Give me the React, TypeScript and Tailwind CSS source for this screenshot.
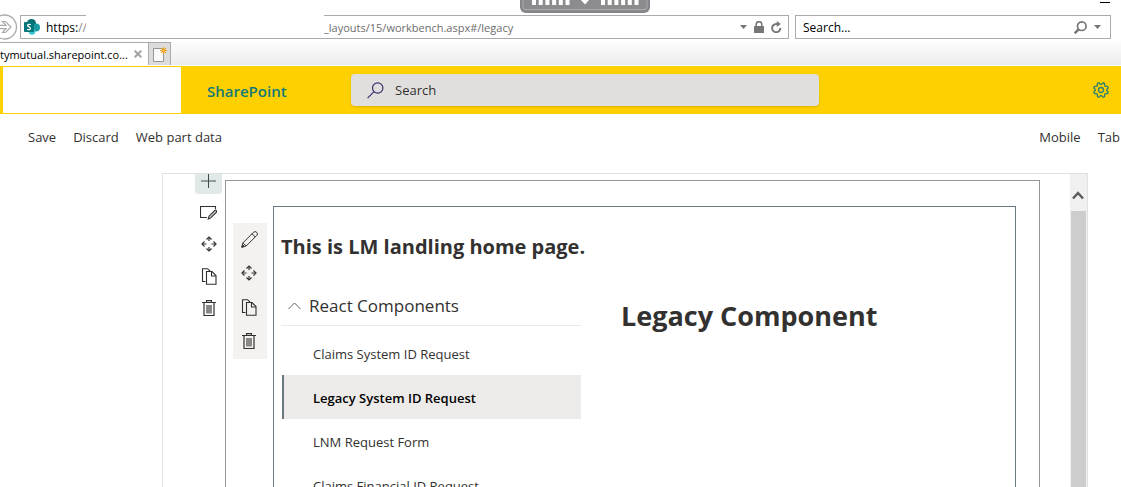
import React from "react";

type IconProps = { className?: string };

function ForwardIcon() {
  return (
    <svg width="18" height="26" viewBox="0 0 18 26" fill="none" stroke="#ababab">
      <circle cx="4.500" cy="13" r="12" strokeWidth="1.300" />
      <path d="M-4 11.300H6L2.500 7.500H5.500L11 13L5.500 18.500H2.500L6 14.700H-4" strokeWidth="1.200" />
    </svg>
  );
}

function SharePointLogo() {
  return (
    <svg width="16" height="16" viewBox="0 0 16 16">
      <circle cx="7.500" cy="4.500" r="4.500" fill="#036c70" />
      <circle cx="12" cy="8.500" r="4" fill="#1a9ba1" />
      <circle cx="8" cy="12.500" r="3.200" fill="#37c6d0" />
      <rect x="0" y="3" width="10" height="10" rx="0.800" fill="#03787c" />
      <path
        d="M6.700 5.700C6.200 5.300 3.600 5 3.500 6.600C3.500 8.200 6.500 7.700 6.500 9.400C6.500 11 3.900 10.700 3.200 10.200"
        stroke="#fff"
        strokeWidth="1.300"
        fill="none"
      />
    </svg>
  );
}

function CaretDown() {
  return (
    <svg width="7" height="4" viewBox="0 0 7 4" fill="#767676">
      <path d="M0 0H7L3.500 4Z" />
    </svg>
  );
}

function LockIcon() {
  return (
    <svg width="10" height="12" viewBox="0 0 10 12">
      <path d="M2.200 6V3.500a2.800 2.800 0 0 1 5.600 0V6" fill="none" stroke="#767676" strokeWidth="1.500" />
      <rect y="5" width="10" height="7" rx="0.600" fill="#767676" />
    </svg>
  );
}

function ReloadIcon() {
  return (
    <svg width="11" height="12" viewBox="0 0 11 12" fill="none">
      <path d="M9.300 6.900A4.100 4.100 0 1 1 5.200 3H7" stroke="#767676" strokeWidth="1.900" />
      <path d="M5.800 0L9.800 3L5.800 6Z" fill="#767676" />
    </svg>
  );
}

function BrowserSearchIcon() {
  return (
    <svg width="13" height="13" viewBox="0 0 13 13" fill="none" stroke="#767676">
      <circle cx="7.800" cy="5.200" r="4.300" strokeWidth="1.700" />
      <path d="M4.800 8.200L0.700 12.300" strokeWidth="2.400" />
    </svg>
  );
}

function CloseIcon() {
  return (
    <svg width="8" height="8" viewBox="0 0 8 8" stroke="#a3a3a3" strokeWidth="2">
      <path d="M0.700 0.700L7.300 7.300M7.300 0.700L0.700 7.300" />
    </svg>
  );
}

function NewTabIcon() {
  return (
    <svg width="14" height="15" viewBox="0 0 14 15" fill="none">
      <path d="M0.500 1.500H10.500V14.500H0.500Z" fill="#fafafa" stroke="#969696" />
      <circle cx="10.500" cy="3.500" r="2.200" fill="#f6a81c" />
      <path
        d="M10.500 0V7M7 3.500H14M8 1L13 6M13 1L8 6"
        stroke="#e79a1a"
        strokeWidth="0.900"
      />
      <circle cx="10.500" cy="3.500" r="1.100" fill="#ffd35c" />
    </svg>
  );
}

function SearchIcon() {
  return (
    <svg width="17" height="17" viewBox="0 0 17 17" fill="none" stroke="#3b2e6b" strokeWidth="1.200">
      <circle cx="10.700" cy="6" r="5.200" />
      <path d="M7 9.700L0.600 16.100" />
    </svg>
  );
}

function GearIcon() {
  const teeth = Array.from({ length: 64 }, (_, i) => {
    const angle = (i / 64) * Math.PI * 2 + Math.PI / 8;
    const radius = 6.6 - Math.max(-0.9, Math.min(0.9, Math.cos((angle) * 8) * 1.6));
    return `${(8 + radius * Math.sin(angle)).toFixed(2)},${(8 - radius * Math.cos(angle)).toFixed(2)}`;
  }).join(" ");
  return (
    <svg width="16" height="16" viewBox="0 0 16 16" fill="none" stroke="#2b8073" strokeWidth="1.300">
      <polygon points={teeth} />
      <circle cx="8" cy="8" r="2.500" />
    </svg>
  );
}

function PlusIcon() {
  return (
    <svg width="15" height="15" viewBox="0 0 15 15">
      <path d="M0 7H15" stroke="#7d8a8c" strokeWidth="1.600" />
      <path d="M7.500 0V14" stroke="#3c4a4d" />
    </svg>
  );
}

function EditSectionIcon() {
  return (
    <svg width="17" height="15" viewBox="0 0 17 15" fill="none" stroke="#323130">
      <path d="M7 12.500H0.500V1.500H15.500V4" strokeWidth="1.100" />
      <path d="M8.300 14L9 11.200L14.600 5.600A1.200 1.200 0 0 1 16.300 7.300L10.800 12.900Z" fill="#c8c8c8" strokeWidth="1.100" />
    </svg>
  );
}

function PencilIcon() {
  return (
    <svg width="17" height="17" viewBox="0 0 17 17" fill="none" stroke="#323130">
      <path d="M0.800 16.200L2 11.800L12.500 1.300A2 2 0 0 1 15.700 4.500L5.200 15Z" />
      <path d="M2 11.800L5.200 15M11 2.800L14.200 6M0.800 16.200L3.300 15.500L1.600 13.700Z" />
    </svg>
  );
}

function MoveIcon() {
  return (
    <svg width="16" height="16" viewBox="0 0 16 16" fill="none" stroke="#323130" strokeWidth="1.200">
      <path d="M8 1V5M8 11V15M1 8H5.500M10.500 8H15" />
      <path d="M5.500 3.500L8 1L10.500 3.500M5.500 12.500L8 15L10.500 12.500M3.500 5.500L1 8L3.500 10.500M12.500 5.500L15 8L12.500 10.500" />
    </svg>
  );
}

function CopyIcon() {
  return (
    <svg width="16" height="17" viewBox="0 0 16 17" fill="none" stroke="#323130" strokeWidth="1.100">
      <path d="M4.500 13.500H1.500V0.700H6.500L9 3" />
      <path d="M5.500 3.500H11L15 7.500V16.300H5.500Z" />
      <path d="M10.500 3.500V8H15" />
    </svg>
  );
}

function TrashIcon() {
  return (
    <svg width="14" height="17" viewBox="0 0 14 17" fill="none" stroke="#323130">
      <path d="M0 2.500H14M4.500 2.500V0.600H9.500V2.500" strokeWidth="1.100" />
      <path d="M2 2.500V15.500H12V2.500" strokeWidth="1.200" />
      <rect x="4" y="5" width="6" height="8.500" fill="#8a8886" stroke="none" />
    </svg>
  );
}

function ChevronUp({ className }: IconProps) {
  return (
    <svg className={className} width="13" height="8" viewBox="0 0 13 8" fill="none" stroke="#605e5c">
      <path d="M0.500 7L6.500 1L12.500 7" />
    </svg>
  );
}

function ScrollUpIcon() {
  return (
    <svg width="12" height="9" viewBox="0 0 12 9" fill="none" stroke="#5c5c5c" strokeWidth="2.500">
      <path d="M1 7.500L6 2L11 7.500" />
    </svg>
  );
}

function SessionGrip() {
  const dots = [0, 1, 2, 3, 4, 5];
  return (
    <div className="absolute top-0 left-[520px] h-[13px] w-[130px] rounded-b-md border-x-2 border-b-2 border-[#84848a] bg-[#8c8c8e]">
      <svg width="126" height="11" viewBox="0 0 126 11" fill="#fff">
        <path d="M1 0V7Q1 9.500 4 9.500H122Q125 9.500 125 7V0" fill="none" stroke="#a9a9ab" />
        {dots.map((i) => (
          <g key={i}>
            <rect x={10 + i * 6.7} width="4" height="5" />
            <rect x={79 + i * 6.7} width="4" height="5" />
          </g>
        ))}
        <path d="M59 0H67L63 4.500Z" />
      </svg>
    </div>
  );
}

function BrowserChrome() {
  return (
    <header className="text-xs text-black">
      <div className="flex h-[15px] items-start justify-end pr-[11px]">
        <button aria-label="Minimize" className="mt-0.5 h-px w-2.5 bg-black" />
      </div>
      <div className="flex h-6 items-center pr-2.5">
        <button aria-label="Forward" className="w-5 shrink-0">
          <ForwardIcon />
        </button>
        <div className="relative flex h-full min-w-0 flex-1 items-center border border-[#ababab] pr-1.5 pl-[3px]">
          <SharePointLogo />
          <span className="ml-1.5 pt-0.5">https:</span>
          <span className="pt-0.5 text-[#8a8a8a]">//</span>
          <div className="absolute -top-px left-[65px] h-[23px] w-[238px] bg-white" />
          <input
            aria-label="Address"
            defaultValue="_layouts/15/workbench.aspx#/legacy"
            className="absolute left-[303px] w-[300px] bg-transparent pt-0.5 text-[11px] text-[#6d6d6d] outline-none"
          />
          <div className="ml-auto flex items-center gap-[7px]">
            <button aria-label="Show address history">
              <CaretDown />
            </button>
            <LockIcon />
            <button aria-label="Reload">
              <ReloadIcon />
            </button>
          </div>
        </div>
        <div className="ml-1.5 flex h-full w-[316px] shrink-0 items-center gap-[7px] border border-[#ababab] pr-[9px] pl-[7px]">
          <input
            aria-label="Search the web"
            placeholder="Search..."
            className="min-w-0 flex-1 bg-transparent pt-0.5 outline-none placeholder:text-black"
          />
          <button aria-label="Go">
            <BrowserSearchIcon />
          </button>
          <button aria-label="Search providers">
            <CaretDown />
          </button>
        </div>
      </div>
      <div className="border-b border-white bg-linear-to-b from-white to-[#ececec] pt-[3px]">
        <div className="flex h-[23px]">
          <div className="flex w-[148px] items-center justify-between border-t border-[#ababab] bg-white pr-1.5">
            <span className="pt-0.5 text-[11px] whitespace-nowrap">tymutual.sharepoint.co...</span>
            <button aria-label="Close tab">
              <CloseIcon />
            </button>
          </div>
          <button
            aria-label="New tab"
            className="flex w-[23px] items-center justify-center border border-b-0 border-[#ababab] bg-[#dcdcdc]"
          >
            <NewTabIcon />
          </button>
        </div>
      </div>
    </header>
  );
}

function SuiteBar() {
  return (
    <div className="flex h-12 items-center bg-[#ffd000] pr-3 pl-[3px]">
      <div className="h-[46px] w-[178px] shrink-0 bg-white" />
      <a href="#" className="ml-[26px] w-36 shrink-0 pt-0.5 text-[15px] font-semibold text-[#0f7a78]">
        SharePoint
      </a>
      <label className="flex h-8 w-[468px] items-center gap-[11px] rounded-sm bg-[#e0dfdd] px-4 shadow-[0_1px_2px_rgba(0,0,0,0.15)]">
        <SearchIcon />
        <input
          aria-label="Search"
          placeholder="Search"
          className="min-w-0 flex-1 bg-transparent pt-0.5 text-[13px] outline-none placeholder:text-[#323130]"
        />
      </label>
      <button aria-label="Settings" className="ml-auto">
        <GearIcon />
      </button>
    </div>
  );
}

function CommandBar() {
  return (
    <div className="flex h-[59px] items-start justify-between pt-3.5 pr-px pl-7 text-[13px] leading-[18px] text-[#323130]">
      <div className="flex gap-[17px]">
        <button>Save</button>
        <button>Discard</button>
        <button>Web part data</button>
      </div>
      <div className="flex gap-[17px]">
        <button>Mobile</button>
        <button>Tab</button>
      </div>
    </div>
  );
}

const sectionTools = [
  { label: "Edit section", icon: <EditSectionIcon /> },
  { label: "Move section", icon: <MoveIcon /> },
  { label: "Duplicate section", icon: <CopyIcon /> },
  { label: "Delete section", icon: <TrashIcon /> },
];

const webPartTools = [
  { label: "Edit web part", icon: <PencilIcon /> },
  { label: "Move web part", icon: <MoveIcon /> },
  { label: "Duplicate web part", icon: <CopyIcon /> },
  { label: "Delete web part", icon: <TrashIcon /> },
];

const links = [
  "Claims System ID Request",
  "Legacy System ID Request",
  "LNM Request Form",
  "Claims Financial ID Request",
];

function LinkNav() {
  return (
    <nav className="w-[300px] shrink-0">
      <button className="flex h-10 w-full items-center gap-2 border-b border-[#edebe9] pl-[7px] text-[17px]">
        <ChevronUp />
        React Components
      </button>
      <ul className="pt-[5px]">
        {links.map((label) => {
          const selected = label === "Legacy System ID Request";
          return (
            <li key={label}>
              <a
                href="#"
                className={
                  selected
                    ? "ml-px flex h-11 items-center border-l-2 border-[#69797e] bg-[#edebe9] pt-[3px] pl-[29px] text-[13px] font-semibold text-black"
                    : "flex h-11 items-center pt-[3px] pl-8 text-[13px]"
                }
              >
                {label}
              </a>
            </li>
          );
        })}
      </ul>
    </nav>
  );
}

function WebPart() {
  return (
    <div className="mt-[25px] min-w-0 flex-1 border border-b-0 border-[#69797e] pl-[7px]">
      <h1 className="mt-[26px] text-xl leading-7 font-bold">This is LM landling home page.</h1>
      <div className="mt-[25px] flex gap-10">
        <LinkNav />
        <h2 className="mt-3 text-[27px] leading-9 font-bold">Legacy Component</h2>
      </div>
    </div>
  );
}

function Canvas() {
  return (
    <main className="mr-[33px] ml-[162px] flex min-h-0 flex-1 overflow-hidden border border-b-0 border-[#e1e1e1] pl-8">
      <div className="mr-[3px] flex w-[27px] shrink-0 flex-col">
        <button
          aria-label="Add section"
          className="mb-0.5 flex h-5 items-start justify-center rounded-b bg-[#e1e9e8]"
        >
          <PlusIcon />
        </button>
        {sectionTools.map((tool) => (
          <button key={tool.label} aria-label={tool.label} className="flex h-8 shrink-0 items-center justify-center">
            {tool.icon}
          </button>
        ))}
      </div>
      <section className="mt-1.5 flex min-w-0 flex-1 gap-1.5 border border-b-0 border-[#979797] pr-[23px] pl-[7px]">
        <div className="mt-[42px] flex w-[34px] shrink-0 flex-col self-start bg-[#f3f2f1]">
          {webPartTools.map((tool) => (
            <button key={tool.label} aria-label={tool.label} className="flex h-[34px] items-center justify-center pr-0.5 pb-0.5">
              {tool.icon}
            </button>
          ))}
        </div>
        <WebPart />
      </section>
      <div className="ml-[30px] flex w-[17px] shrink-0 flex-col bg-[#f0f0f0]">
        <button aria-label="Scroll up" className="flex h-[37px] shrink-0 items-center justify-center pt-1.5 pr-px">
          <ScrollUpIcon />
        </button>
        <div className="mx-px flex-1 bg-[#cdcdcd]" />
      </div>
    </main>
  );
}

export default function App() {
  return (
    <div className="relative flex h-screen flex-col overflow-hidden bg-white font-['Open_Sans',sans-serif] text-[#323130]">
      <BrowserChrome />
      <SuiteBar />
      <CommandBar />
      <Canvas />
      <SessionGrip />
    </div>
  );
}
